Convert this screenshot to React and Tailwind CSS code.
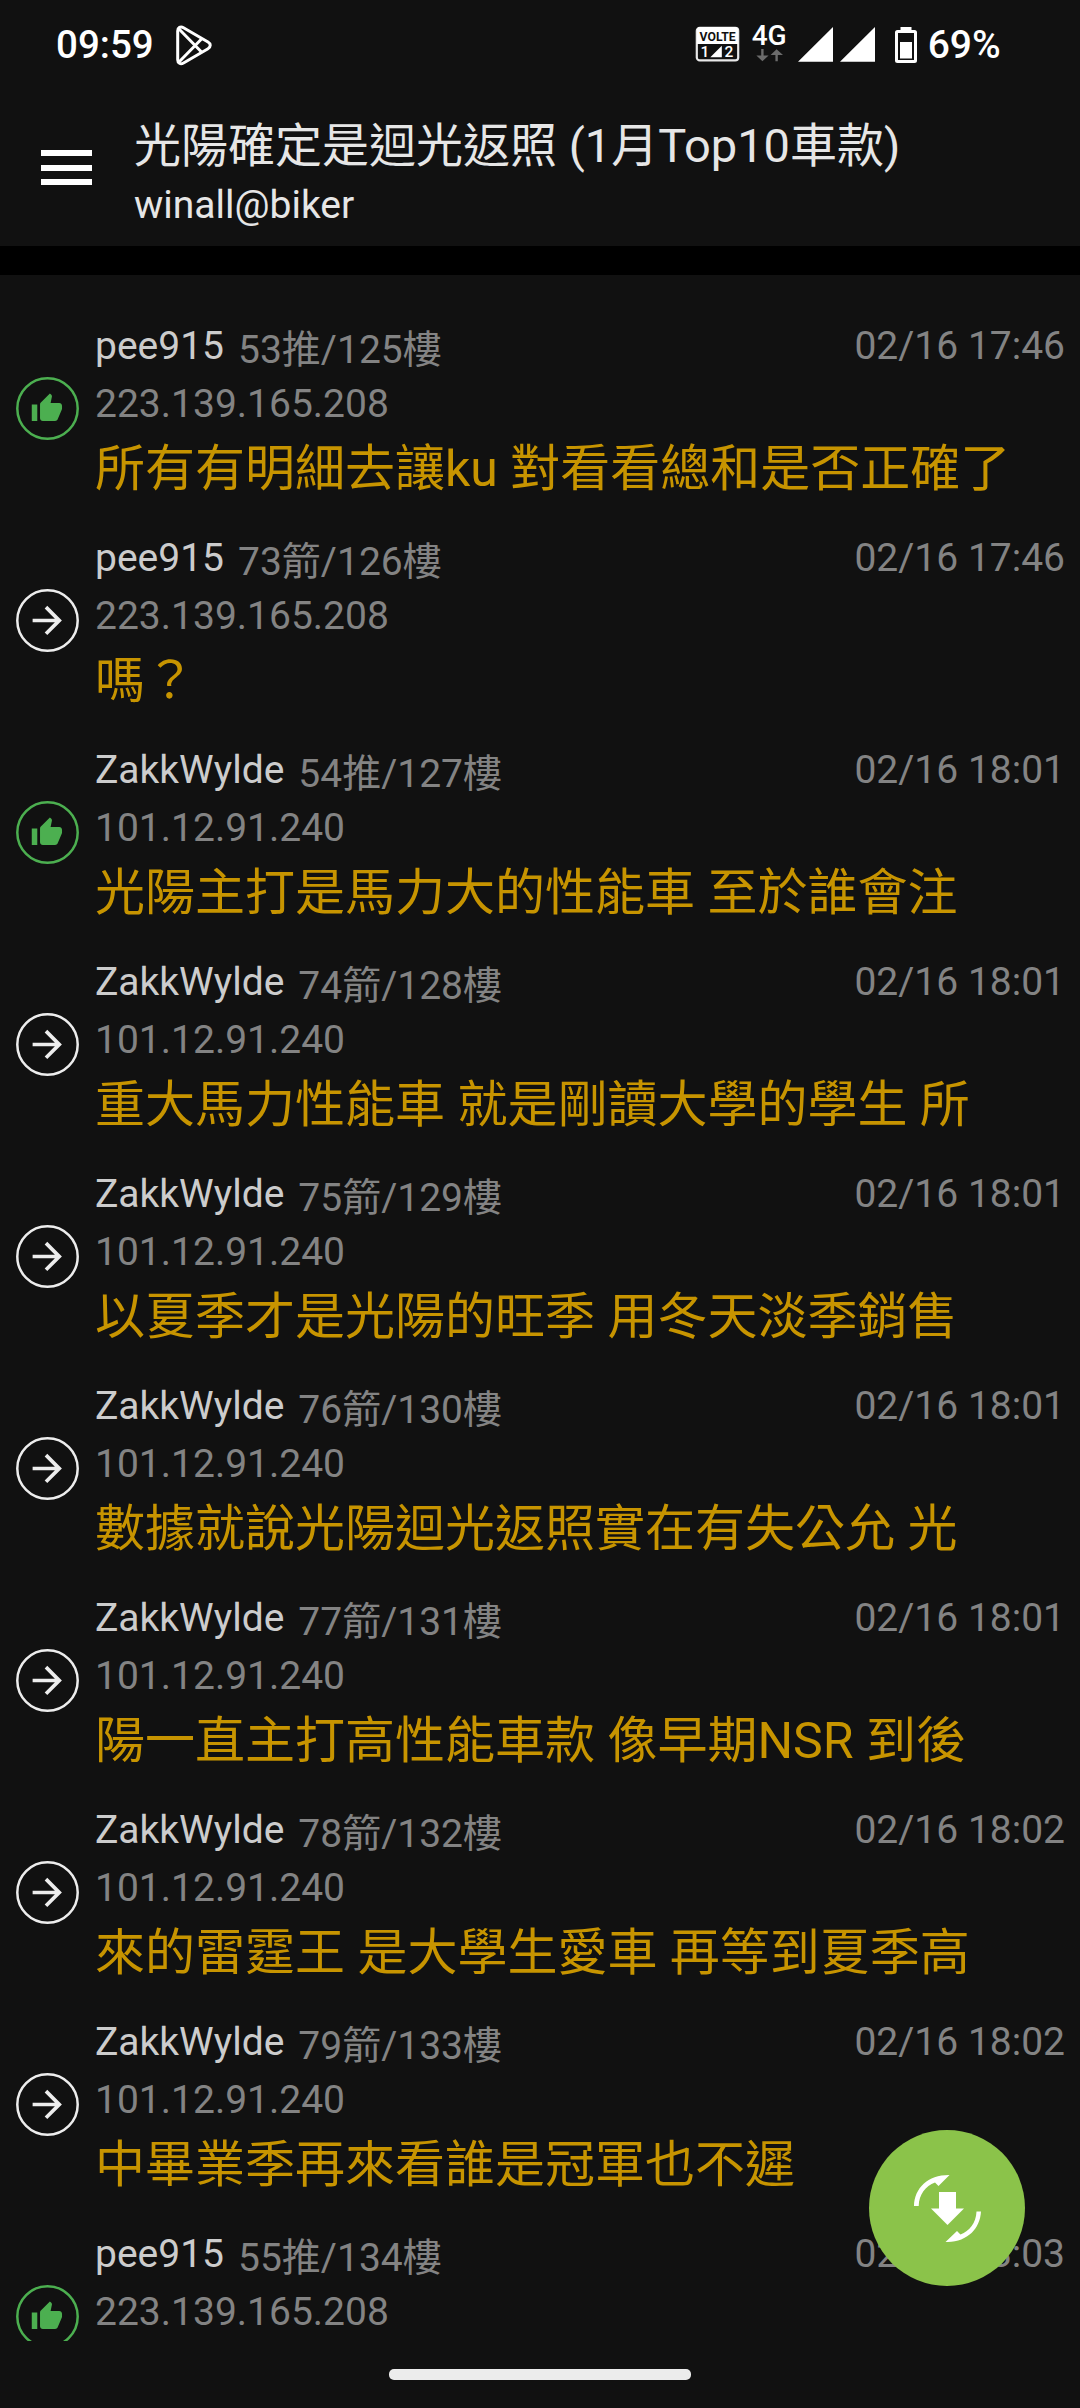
import React from "react";

const ZAKK = { user: "ZakkWylde", ip: "101.12.91.240" };
const PEE = { user: "pee915", ip: "223.139.165.208" };

const comments = [
  { ...PEE, push: true, floor: "53推/125樓", time: "02/16 17:46", text: "所有有明細去讓ku 對看看總和是否正確了" },
  { ...PEE, push: false, floor: "73箭/126樓", time: "02/16 17:46", text: "嗎？" },
  { ...ZAKK, push: true, floor: "54推/127樓", time: "02/16 18:01", text: "光陽主打是馬力大的性能車 至於誰會注" },
  { ...ZAKK, push: false, floor: "74箭/128樓", time: "02/16 18:01", text: "重大馬力性能車 就是剛讀大學的學生 所" },
  { ...ZAKK, push: false, floor: "75箭/129樓", time: "02/16 18:01", text: "以夏季才是光陽的旺季 用冬天淡季銷售" },
  { ...ZAKK, push: false, floor: "76箭/130樓", time: "02/16 18:01", text: "數據就說光陽迴光返照實在有失公允 光" },
  { ...ZAKK, push: false, floor: "77箭/131樓", time: "02/16 18:01", text: "陽一直主打高性能車款 像早期NSR 到後" },
  { ...ZAKK, push: false, floor: "78箭/132樓", time: "02/16 18:02", text: "來的雷霆王 是大學生愛車 再等到夏季高" },
  { ...ZAKK, push: false, floor: "79箭/133樓", time: "02/16 18:02", text: "中畢業季再來看誰是冠軍也不遲" },
  { ...PEE, push: true, floor: "55推/134樓", time: "02/16 18:03", text: "" },
];

// Android status bar
const StatusBar = () => (
  <div className="flex h-[90px] shrink-0 items-start pl-[56px] font-medium text-white">
    <span className="mt-[22px] text-[38.5px] leading-[46px]">09:59</span>

    {/* Play Store notification */}
    <svg className="mt-[25px] ml-[22px] h-[41px] w-[37px]" viewBox="0 0 37 41" fill="none" stroke="currentColor" strokeWidth="3" strokeLinejoin="round">
      <path d="M1.7 6C1.7 2.5 4.5 1 7.5 2.7L32 17c3 1.7 3 5 0 6.7L7.5 38C4.5 39.7 1.7 38.2 1.7 34.7z" />
      <path d="M3 4 26 27.5M3 37 26 13.5" />
    </svg>

    {/* VoLTE badge */}
    <svg className="mt-[26px] ml-[482px] h-[36px] w-[45px]" viewBox="0 0 45 36">
      <rect x="1.8" y="1.8" width="41.4" height="32.6" rx="3" fill="none" stroke="#e8e8e8" strokeWidth="2.2" />
      <path d="M2 4a3 3 0 0 1 3-3h35a3 3 0 0 1 3 3v14H2z" fill="#fff" />
      <text x="22.6" y="14.6" textAnchor="middle" textLength="36" lengthAdjust="spacingAndGlyphs" fontSize="13.6" fontWeight="700" fill="#111">VOLTE</text>
      <text x="5.5" y="31.2" fontSize="15.5" fontWeight="500" fill="#fff">1</text>
      <text x="29.6" y="31.2" fontSize="15.5" fontWeight="500" fill="#fff">2</text>
      <path d="M15.3 31.2 26.8 19.7v11.5z" fill="#fff" />
    </svg>

    <div className="mt-[23px] ml-[11px] flex w-[37px] flex-col items-center">
      <span className="text-[28px] leading-[25px]">4G</span>
      <svg className="mt-px ml-[2px] h-[13px] w-[28px]" viewBox="0 0 28 13" fill="#6b6b6b">
        <path d="M5.2 0h2.4v6.5h5L6.4 12.3.4 6.5h4.8zM19.4 12.3h2.4V6H27L20.6.2 14.6 6h4.8z" />
      </svg>
    </div>

    {/* signal strength, both SIMs */}
    <svg className="mt-[27px] ml-[10px] h-[35px] w-[78px]" viewBox="0 0 78 35" fill="#fff">
      <path d="M0 34.8 35 0v34.8zM42 34.8 77 0v34.8z" />
    </svg>

    <svg className="mt-[27px] ml-[19px] h-[36px] w-[22px]" viewBox="0 0 22 36">
      <path d="M5.5 0h11v4h-11z" fill="#fff" />
      <rect x="1.5" y="4.5" width="19" height="30" rx="1" fill="none" stroke="#fff" strokeWidth="3" />
      <path d="M5 15h12v16.5H5z" fill="#fff" />
    </svg>
    <span className="mt-[22px] ml-[11px] text-[39px] leading-[46px]">69%</span>
  </div>
);

const Header = () => (
  <header className="flex h-[156px] shrink-0 text-[#e6e6e6]">
    <button className="mt-[60px] ml-[41px] flex h-[35px] w-[51px] flex-col justify-between">
      <span className="h-[6px] w-full bg-white" />
      <span className="h-[6px] w-full bg-white" />
      <span className="h-[6px] w-full bg-white" />
    </button>
    <div className="ml-[42px] pt-[26px]">
      <h1 className="text-[47px] leading-[60px] whitespace-nowrap">
        光陽確定是迴光返照 (1月Top10車款)
      </h1>
      <p className="text-[39px] leading-[59px]">winall@biker</p>
    </div>
  </header>
);

const Badge = ({ push }) => (
  <svg
    className={`mt-[59px] h-[63px] w-[63px] shrink-0 ${push ? "text-[#4caf50]" : "text-[#ededed]"}`}
    viewBox="0 0 63 63"
    fill="currentColor"
  >
    <circle cx="31.5" cy="31.5" r="30.2" fill="none" stroke="currentColor" strokeWidth="2.5" />
    {push ? (
      <path
        transform="translate(14.4 15) scale(1.375)"
        d="M1 21h4V9H1v12zm22-11c0-1.1-.9-2-2-2h-6.31l.95-4.57.03-.32c0-.41-.17-.79-.44-1.06L14.17 1 7.59 7.59C7.22 7.95 7 8.45 7 9v10c0 1.1.9 2 2 2h9c.83 0 1.54-.5 1.84-1.22l3.02-7.05c.09-.23.14-.47.14-.73v-2z"
      />
    ) : (
      <path
        transform="translate(9.3 9.5) scale(1.83)"
        d="M12 4l-1.41 1.41L16.17 11H4v2h12.17l-5.58 5.59L12 20l8-8z"
      />
    )}
  </svg>
);

/**
 * One push / arrow comment of the thread
 */
const Comment = ({ user, ip, push, floor, time, text }) => (
  <li className="flex h-[212px] shrink-0 pr-[15px] pl-[16px] text-[39px] text-[#838383]">
    <Badge push={push} />
    <div className="ml-[16px] min-w-0 flex-1 whitespace-nowrap">
      <div className="flex h-[56px] leading-[57px]">
        <span className="text-[#cccccc]">{user}</span>
        <span className="ml-[14px] pt-[4px]">{floor}</span>
        <span className="ml-auto">{time}</span>
      </div>
      <div className="h-[60px] leading-[61px]">{ip}</div>
      <div className="text-[50px] leading-[70px] text-[#c79400]">{text}</div>
    </div>
  </li>
);

export default function App() {
  return (
    <div
      lang="zh-Hant"
      className="relative flex h-[2408px] w-[1080px] flex-col overflow-hidden bg-[#111111] font-[Roboto,'Noto_Sans_CJK_TC',sans-serif]"
    >
      <StatusBar />
      <Header />
      <div className="h-[29px] shrink-0 bg-black" />

      <ul className="flex h-[2066px] shrink-0 flex-col overflow-hidden pt-[43px]">
        {comments.map((comment) => (
          <Comment key={comment.floor} {...comment} />
        ))}
      </ul>

      {/* gesture bar */}
      <div className="flex flex-1 justify-center pt-[28px]">
        <div className="h-[11px] w-[302px] rounded-[5px] bg-[#ececec]" />
      </div>

      {/* jump to latest */}
      <button className="absolute top-[2130px] left-[869px] flex h-[156px] w-[156px] items-center justify-center rounded-full bg-[#8bc34a]">
        <svg className="h-[68px] w-[68px]" viewBox="0 0 68 68" fill="#fff">
          <path d="M26 18h17v16.5h8L34.5 51 18 34.5h8z" />
          <path d="M1 32C1.5 14 15 .8 36.5 1L25.5 12 22 8.5C12.5 12 6 20.5 5.7 32z" />
          <path d="M68 37.5C67 55 54 68.500 32.5 68L44 57 47.5 60.5C56.5 57 63 49 63.5 37.5z" />
        </svg>
      </button>
    </div>
  );
}
